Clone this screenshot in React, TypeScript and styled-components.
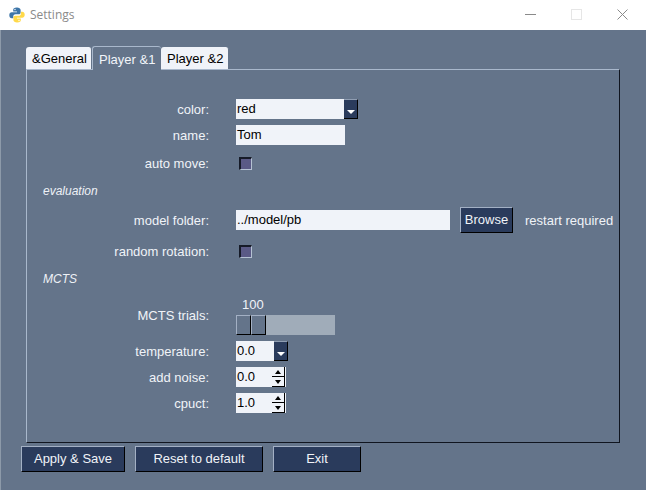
import styled, {createGlobalStyle} from "styled-components";

const BG_COLOR = "#64748a";
const FIELD_COLOR = "#f0f3f9";
const BUTTON_COLOR = "#2a3b5c";
const LIGHT_EDGE = "#a9b8cc";

const GlobalStyle = createGlobalStyle`
  html, body {
    margin: 0;
    padding: 0;
    background: ${BG_COLOR};
  }
  body {
    font-family: "Liberation Sans", Arial, sans-serif;
    font-size: 13px;
  }
`;

const Window = styled.div`
  width: 646px;
  height: 490px;
  display: flex;
  flex-direction: column;
  overflow: hidden;
`;

const TitleBar = styled.div`
  height: 30px;
  flex-shrink: 0;
  background: #fff;
  display: flex;
  align-items: center;
  padding-left: 9px;
  color: #8a8a8a;
  font-family: "Open Sans", sans-serif;
  font-size: 12px;
`;

const TitleText = styled.span`
  margin-left: 5px;
  margin-top: -1px;
`;

const WindowControls = styled.div`
  margin-left: auto;
  margin-top: -2px;
  display: flex;
  align-items: center;
  padding-right: 18px;
  gap: 35px;
`;

const Client = styled.div`
  flex: 1;
  background: ${BG_COLOR};
  border-left: 1px solid #8d9aa9;
  padding: 17px 0 0 25px;
  display: flex;
  flex-direction: column;
`;

const TabBar = styled.div`
  display: flex;
  height: 22px;
  flex-shrink: 0;
  position: relative;
  z-index: 1;
`;

const Tab = styled.div<{ $active?: boolean; $w: number }>`
  width: ${({$w}) => $w}px;
  box-sizing: border-box;
  height: ${({$active}) => ($active ? 24 : 22)}px;
  margin-top: ${({$active}) => ($active ? -1 : 0)}px;
  border-radius: 3px 3px 0 0;
  padding-left: 6px;
  line-height: ${({$active}) => ($active ? 25 : 23)}px;
  background: ${({$active}) => ($active ? BG_COLOR : FIELD_COLOR)};
  color: ${({$active}) => ($active ? "#f2f5fa" : "#000")};
  border-top: ${({$active}) => ($active ? `1px solid ${LIGHT_EDGE}` : "none")};
  border-left: ${({$active}) => ($active ? `1px solid ${LIGHT_EDGE}` : "none")};
  border-right: ${({$active}) => ($active ? "none" : `1px solid ${BG_COLOR}`)};
`;

const Pane = styled.div`
  width: 594px;
  height: 374px;
  flex-shrink: 0;
  box-sizing: border-box;
  border-top: 1px solid ${LIGHT_EDGE};
  border-left: 1px solid ${LIGHT_EDGE};
  border-right: 1px solid #10151f;
  border-bottom: 1px solid #10151f;
  padding-top: 26px;
`;

const Row = styled.div<{ $h: number }>`
  height: ${({$h}) => $h}px;
  display: flex;
  align-items: center;
  gap: 27px;
`;

const Label = styled.div`
  width: 182px;
  flex-shrink: 0;
  text-align: right;
  color: #f0f3f8;
`;

const SectionTitle = styled.div`
  padding: 2px 0 0 16px;
  color: #eef1f6;
  font-style: italic;
  font-size: 12px;
`;

const Field = styled.div<{ $w: number }>`
  width: ${({$w}) => $w}px;
  flex-shrink: 0;
  height: 20px;
  box-sizing: border-box;
  background: ${FIELD_COLOR};
  color: #000;
  line-height: 20px;
  padding-left: 1px;
  display: flex;
  justify-content: space-between;
`;

const ComboButton = styled.div`
  width: 14px;
  height: 20px;
  background: ${BUTTON_COLOR};
  border-right: 1px solid #000;
  border-bottom: 1px solid #000;
  border-top: 1px solid #8f9db2;
  box-sizing: border-box;
  display: flex;
  align-items: flex-end;
  justify-content: center;
  padding-bottom: 4px;
`;

const ComboArrow = styled.div`
  width: 0;
  height: 0;
  border-left: 4px solid transparent;
  border-right: 4px solid transparent;
  border-top: 4px solid #fff;
`;

const SpinButtons = styled.div`
  width: 12px;
  display: flex;
  flex-direction: column;
  margin-right: 1px;
  border-right: 1px solid #000;
  border-bottom: 1px solid #000;
`;

const SpinButton = styled.div`
  flex: 1;
  display: flex;
  align-items: center;
  justify-content: center;
  & + & {
    border-top: 1px solid #000;
  }
`;

const SpinArrow = styled.div<{ $down?: boolean }>`
  width: 0;
  height: 0;
  border-left: 3px solid transparent;
  border-right: 3px solid transparent;
  border-top: ${({$down}) => ($down ? "4px solid #000" : "none")};
  border-bottom: ${({$down}) => ($down ? "none" : "4px solid #000")};
`;

const CheckBox = styled.div`
  width: 13px;
  height: 13px;
  margin-left: 3px;
  box-sizing: border-box;
  background: #5a5a86;
  border-top: 2px solid #161b28;
  border-left: 2px solid #161b28;
  border-right: 1px solid #b5c2d3;
  border-bottom: 1px solid #b5c2d3;
`;

const BrowseButton = styled.div`
  width: 53px;
  height: 26px;
  flex-shrink: 0;
  box-sizing: border-box;
  margin-left: -17px;
  background: ${BUTTON_COLOR};
  color: #f0f3f8;
  text-align: center;
  line-height: 24px;
  border: 1px solid;
  border-color: #a3b0c4 #000 #000 #a3b0c4;
`;

const Hint = styled.div`
  margin-left: -15px;
  color: #f0f3f8;
  white-space: nowrap;
`;

const SliderBox = styled.div`
  width: 99px;
  display: flex;
  flex-direction: column;
  margin-top: -1px;
`;

const SliderValue = styled.div`
  padding-left: 6px;
  height: 20px;
  line-height: 20px;
  color: #f0f3f8;
`;

const SliderTrough = styled.div`
  height: 20px;
  background: #a0acb9;
  display: flex;
`;

const SliderThumb = styled.div`
  width: 15px;
  height: 20px;
  box-sizing: border-box;
  background: ${BG_COLOR};
  border: 1px solid;
  border-color: #a3b0c4 #000 #000 #a3b0c4;
`;

const Footer = styled.div`
  display: flex;
  gap: 10px;
  margin: 3px 0 0 -5px;
`;

const FooterButton = styled.div<{ $w: number }>`
  width: ${({$w}) => $w}px;
  height: 26px;
  box-sizing: border-box;
  background: ${BUTTON_COLOR};
  color: #f0f3f8;
  text-align: center;
  line-height: 24px;
  border: 1px solid;
  border-color: #a3b0c4 #000 #000 #a3b0c4;
`;

function PythonLogo() {
    return (
        <svg width="16" height="16" viewBox="0 0 16 16">
            <path d="M8 .5 C5 .5 4.2 1.6 4.2 3 V4.6 H8 V5.3 H2.8 C1.2 5.3 .3 6.5 .3 8.2 C.3 10 1.3 11.2 2.8 11.2 H4.3 V9.3 C4.3 8 5.3 7.2 6.5 7.2 H9.8 C10.9 7.2 11.6 6.4 11.6 5.4 V3 C11.6 1.5 10 .5 8 .5 Z" fill="#3d75a8"/>
            <path d="M8 15.5 C11 15.5 11.8 14.4 11.8 13 V11.4 H8 V10.7 H13.2 C14.8 10.7 15.7 9.5 15.7 7.8 C15.7 6 14.7 4.8 13.2 4.8 H11.9 V6.7 C11.9 8 10.9 8.8 9.7 8.8 H6.2 C5.1 8.8 4.4 9.6 4.4 10.6 V13 C4.4 14.5 6 15.5 8 15.5 Z" fill="#ffd94a"/>
            <circle cx="6" cy="2.5" r=".7" fill="#fff"/>
            <circle cx="10" cy="13.5" r=".7" fill="#fff"/>
        </svg>
    );
}

function Spin() {
    return (
        <SpinButtons>
            <SpinButton><SpinArrow/></SpinButton>
            <SpinButton><SpinArrow $down/></SpinButton>
        </SpinButtons>
    );
}

export default function App() {
    return (
        <Window>
            <GlobalStyle/>
            <TitleBar>
                <PythonLogo/>
                <TitleText>Settings</TitleText>
                <WindowControls>
                    <svg width="11" height="11" viewBox="0 0 11 11">
                        <path d="M0 5.5H11" stroke="#8a8a8a"/>
                    </svg>
                    <svg width="11" height="11" viewBox="0 0 11 11">
                        <rect x=".5" y=".5" width="10" height="10" fill="none" stroke="#e6e6e6"/>
                    </svg>
                    <svg width="11" height="11" viewBox="0 0 11 11">
                        <path d="M.5 .5L10.5 10.5M10.5 .5L.5 10.5" stroke="#8a8a8a"/>
                    </svg>
                </WindowControls>
            </TitleBar>
            <Client>
                <TabBar>
                    <Tab $w={66}>&amp;General</Tab>
                    <Tab $w={69} $active>Player &amp;1</Tab>
                    <Tab $w={68}>Player &amp;2</Tab>
                </TabBar>
                <Pane>
                    <Row $h={26}>
                        <Label>color:</Label>
                        <Field $w={122}>red<ComboButton><ComboArrow/></ComboButton></Field>
                    </Row>
                    <Row $h={26}>
                        <Label>name:</Label>
                        <Field $w={109}>Tom</Field>
                    </Row>
                    <Row $h={30}>
                        <Label>auto move:</Label>
                        <CheckBox/>
                    </Row>
                    <Row $h={24}>
                        <SectionTitle>evaluation</SectionTitle>
                    </Row>
                    <Row $h={36}>
                        <Label>model folder:</Label>
                        <Field $w={214}>../model/pb</Field>
                        <BrowseButton>Browse</BrowseButton>
                        <Hint>restart required</Hint>
                    </Row>
                    <Row $h={26}>
                        <Label>random rotation:</Label>
                        <CheckBox/>
                    </Row>
                    <Row $h={28}>
                        <SectionTitle>MCTS</SectionTitle>
                    </Row>
                    <Row $h={46}>
                        <Label>MCTS trials:</Label>
                        <SliderBox>
                            <SliderValue>100</SliderValue>
                            <SliderTrough>
                                <SliderThumb/>
                                <SliderThumb/>
                            </SliderTrough>
                        </SliderBox>
                    </Row>
                    <Row $h={26}>
                        <Label>temperature:</Label>
                        <Field $w={52}>0.0<ComboButton><ComboArrow/></ComboButton></Field>
                    </Row>
                    <Row $h={26}>
                        <Label>add noise:</Label>
                        <Field $w={50}>0.0<Spin/></Field>
                    </Row>
                    <Row $h={26}>
                        <Label>cpuct:</Label>
                        <Field $w={50}>1.0<Spin/></Field>
                    </Row>
                </Pane>
                <Footer>
                    <FooterButton $w={104}>Apply &amp; Save</FooterButton>
                    <FooterButton $w={128}>Reset to default</FooterButton>
                    <FooterButton $w={88}>Exit</FooterButton>
                </Footer>
            </Client>
        </Window>
    );
}
